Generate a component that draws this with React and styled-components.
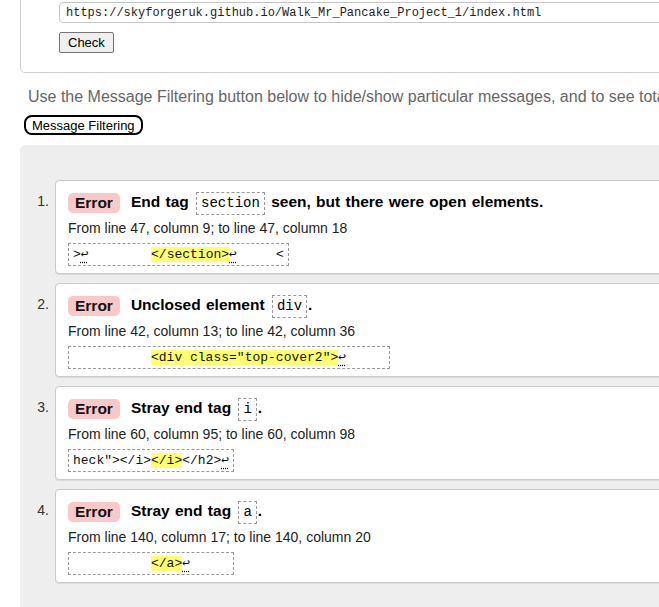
import styled, { createGlobalStyle } from "styled-components";

const GlobalStyle = createGlobalStyle`
	html, body {
		margin: 0;
		background: #fff;
		overflow: hidden;
		font-family: "Liberation Sans", Arial, sans-serif;
	}
`;

const messages = [
	{
		pre: "End tag",
		code: "section",
		post: " seen, but there were open elements.",
		loc: "From line 47, column 9; to line 47, column 18",
		before: ">↩        ",
		hl: "</section>",
		after: "↩     <",
	},
	{
		pre: "Unclosed element",
		code: "div",
		post: ".",
		loc: "From line 42, column 13; to line 42, column 36",
		before: "          ",
		hl: '<div class="top-cover2">',
		after: "↩     ",
	},
	{
		pre: "Stray end tag",
		code: "i",
		post: ".",
		loc: "From line 60, column 95; to line 60, column 98",
		before: 'heck"></i>',
		hl: "</i>",
		after: "</h2>↩",
	},
	{
		pre: "Stray end tag",
		code: "a",
		post: ".",
		loc: "From line 140, column 17; to line 140, column 20",
		before: "          ",
		hl: "</a>",
		after: "↩     ",
	},
];

// turn the ↩ characters into marked line feeds
const withBreaks = (text) =>
	text.split("↩").map((part, i) => (
		<span key={i}>
			{i > 0 && <LineFeed>↩</LineFeed>}
			{part}
		</span>
	));

export default function App() {
	return (
		<>
			<GlobalStyle />
			<Page>
				<FormPanel>
					<UrlInput
						readOnly
						value="https://skyforgeruk.github.io/Walk_Mr_Pancake_Project_1/index.html"
					/>
					<CheckButton>Check</CheckButton>
				</FormPanel>
				<Hint>
					Use the Message Filtering button below to hide/show particular messages, and to see total counts of errors and warnings.
				</Hint>
				<FilterButton>Message Filtering</FilterButton>
				<Results>
					{messages.map((m, index) => (
						<Item key={index}>
							<Num>{index + 1}.</Num>
							<Card>
								<Heading>
									<Badge>Error</Badge>
									<Title>
										{m.pre} <Code>{m.code}</Code>
										{m.post}
									</Title>
								</Heading>
								<Location>{m.loc}</Location>
								<Extract>
									{withBreaks(m.before)}
									<Highlight>{m.hl}</Highlight>
									{withBreaks(m.after)}
								</Extract>
							</Card>
						</Item>
					))}
				</Results>
			</Page>
		</>
	);
}

const Page = styled.div`
	padding-left: 20px;
	width: 820px;
`;

const FormPanel = styled.div`
	margin-top: -20px;
	border: 1px solid #cfcfcf;
	border-radius: 5px;
	padding: 21px 0 19px 38px;
`;

const UrlInput = styled.input`
	display: block;
	box-sizing: border-box;
	width: 740px;
	height: 21px;
	padding: 0 6px;
	border: 1px solid #c6c6c6;
	border-radius: 4px;
	font-family: "Liberation Mono", "DejaVu Sans Mono", monospace;
	font-size: 12px;
	color: #222;
	outline: none;
`;

const CheckButton = styled.button`
	display: block;
	margin-top: 9px;
	height: 21px;
	padding: 0 8px;
	font-family: "Liberation Sans", Arial, sans-serif;
	font-size: 13px;
	color: #000;
	background: #efefef;
	border: 1px solid #767676;
	border-radius: 2px;
`;

const Hint = styled.p`
	margin: 15px 0 0 8px;
	font-size: 16px;
	line-height: 18px;
	color: #666;
	white-space: nowrap;
`;

const FilterButton = styled.button`
	display: block;
	margin: 9px 0 0 4px;
	height: 20px;
	padding: 0 6px;
	font-family: "Liberation Sans", Arial, sans-serif;
	font-size: 13px;
	color: #000;
	background: #fff;
	border: 2px solid #000;
	border-radius: 8px;
`;

const Results = styled.ol`
	list-style: none;
	margin: 10px 0 0;
	padding: 35px 0 40px;
	background: #eee;
	border-top-left-radius: 5px;
`;

const Item = styled.li`
	display: flex;
	align-items: flex-start;
	margin-bottom: 9px;
`;

const Num = styled.span`
	width: 29px;
	padding: 13px 6px 0 0;
	text-align: right;
	font-size: 14px;
	line-height: 17px;
	color: #333;
`;

const Card = styled.div`
	width: 700px;
	background: #fff;
	border: 1px solid #cacaca;
	border-radius: 4px;
	padding: 10px 12px 7px;
	box-shadow: 0 1px 0 #dcdcdc;
`;

const Heading = styled.div`
	display: flex;
	align-items: center;
	height: 23px;
`;

const Badge = styled.span`
	margin-right: 11px;
	padding: 0 7px;
	line-height: 20px;
	font-size: 15.5px;
	font-weight: bold;
	color: #111;
	background: #f9c8c8;
	border-radius: 5px;
`;

const Title = styled.span`
	font-size: 15.5px;
	font-weight: bold;
	line-height: 23px;
	word-spacing: 1px;
	color: #000;
`;

const Code = styled.code`
	display: inline-block;
	vertical-align: middle;
	margin: 0 1px 0 2px;
	padding: 2px 4px;
	line-height: 17px;
	font-family: "Liberation Mono", "DejaVu Sans Mono", monospace;
	font-size: 14px;
	font-weight: normal;
	word-spacing: 0;
	border: 1px dashed #999;
`;

const Location = styled.div`
	margin-top: 6px;
	font-size: 14px;
	line-height: 17px;
	color: #222;
`;

const Extract = styled.pre`
	width: fit-content;
	margin: 6px 0 0;
	padding: 2px 4px;
	line-height: 17px;
	font-family: "Liberation Mono", "DejaVu Sans Mono", monospace;
	font-size: 13px;
	color: #111;
	white-space: pre;
	border: 1px dashed #999;
`;

const Highlight = styled.mark`
	background: #ffff70;
	color: inherit;
`;

const LineFeed = styled.span`
	text-decoration: underline dotted #000;
	text-underline-offset: 4px;
`;
